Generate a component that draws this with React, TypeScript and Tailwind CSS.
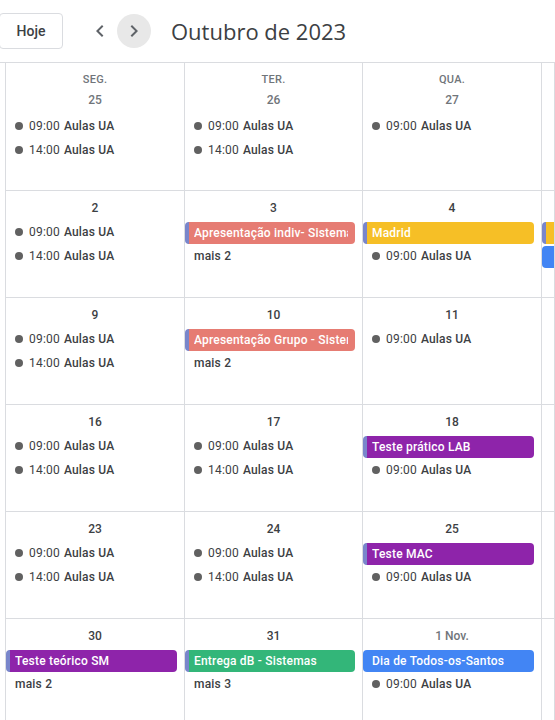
import type { ReactNode } from 'react';

type Item =
  | { kind: 'timed'; time: string; title: string }
  | { kind: 'chip'; title: string; color: string; stripe?: boolean }
  | { kind: 'more'; n: number };

type Cell = {
  dayName?: string;
  date?: string;
  muted?: boolean;
  items?: Item[];
};

const aulas = (time: string): Item => ({ kind: 'timed', time, title: 'Aulas UA' });

const SALMON = 'bg-[#e67c73]';
const BANANA = 'bg-[#f6bf26]';
const GRAPE = 'bg-[#8e24aa]';
const SAGE = 'bg-[#33b679]';
const BLUE = 'bg-[#4285f4]';

const weeks: Cell[][] = [
  [
    { dayName: 'SEG.', date: '25', muted: true, items: [aulas('09:00'), aulas('14:00')] },
    { dayName: 'TER.', date: '26', muted: true, items: [aulas('09:00'), aulas('14:00')] },
    { dayName: 'QUA.', date: '27', muted: true, items: [aulas('09:00')] },
    {},
  ],
  [
    { date: '2', items: [aulas('09:00'), aulas('14:00')] },
    {
      date: '3',
      items: [
        { kind: 'chip', title: 'Apresentação indiv- Sistemas', color: SALMON, stripe: true },
        { kind: 'more', n: 2 },
      ],
    },
    {
      date: '4',
      items: [{ kind: 'chip', title: 'Madrid', color: BANANA, stripe: true }, aulas('09:00')],
    },
    {
      date: '',
      items: [
        { kind: 'chip', title: 'Madrid', color: BANANA, stripe: true },
        { kind: 'chip', title: 'Evento', color: BLUE },
      ],
    },
  ],
  [
    { date: '9', items: [aulas('09:00'), aulas('14:00')] },
    {
      date: '10',
      items: [
        { kind: 'chip', title: 'Apresentação Grupo - Sistemas', color: SALMON, stripe: true },
        { kind: 'more', n: 2 },
      ],
    },
    { date: '11', items: [aulas('09:00')] },
    {},
  ],
  [
    { date: '16', items: [aulas('09:00'), aulas('14:00')] },
    { date: '17', items: [aulas('09:00'), aulas('14:00')] },
    {
      date: '18',
      items: [{ kind: 'chip', title: 'Teste prático LAB', color: GRAPE, stripe: true }, aulas('09:00')],
    },
    {},
  ],
  [
    { date: '23', items: [aulas('09:00'), aulas('14:00')] },
    { date: '24', items: [aulas('09:00'), aulas('14:00')] },
    {
      date: '25',
      items: [{ kind: 'chip', title: 'Teste MAC', color: GRAPE, stripe: true }, aulas('09:00')],
    },
    {},
  ],
  [
    {
      date: '30',
      items: [
        { kind: 'chip', title: 'Teste teórico SM', color: GRAPE, stripe: true },
        { kind: 'more', n: 2 },
      ],
    },
    {
      date: '31',
      items: [
        { kind: 'chip', title: 'Entrega dB - Sistemas', color: SAGE, stripe: true },
        { kind: 'more', n: 3 },
      ],
    },
    {
      date: '1 Nov.',
      muted: true,
      items: [{ kind: 'chip', title: 'Dia de Todos-os-Santos', color: BLUE }, aulas('09:00')],
    },
    {},
  ],
];

function EventRow({ item }: { item: Item }) {
  if (item.kind === 'chip') {
    return (
      <div className="h-[24px] pt-[2px]">
        <div
          className={`h-[22px] mr-[7px] rounded-[4px] flex items-center pr-[7px] ${item.color} ${
            item.stripe ? 'border-l-[4px] border-[#7986cb] pl-[5px]' : 'pl-[9px]'
          }`}
        >
          <div className="overflow-hidden whitespace-nowrap text-white text-[12px] font-medium tracking-[0.2px]">
            {item.title}
          </div>
        </div>
      </div>
    );
  }
  if (item.kind === 'more') {
    return (
      <div className="h-[24px] flex items-center pl-[9px] text-[12px] font-medium tracking-[0.2px] text-[#3c4043]">
        mais {item.n}
      </div>
    );
  }
  return (
    <div className="h-[24px] flex items-center pl-[9px] whitespace-nowrap text-[12px] tracking-[0.2px] text-[#3c4043]">
      <span className="w-[8px] h-[8px] rounded-full bg-[#616161] mr-[6px] shrink-0" />
      <span>{item.time}</span>
      <span className="ml-[4px] font-medium">{item.title}</span>
    </div>
  );
}

function DayCell({ cell, first }: { cell: Cell; first: boolean }) {
  const dateColor = cell.muted ? 'text-[#70757a]' : 'text-[#3c4043]';
  let head: ReactNode;
  if (first) {
    head = (
      <div className="pt-[8px]">
        <div className="h-[18px] flex items-center justify-center text-[11px] font-medium tracking-[0.3px] text-[#70757a]">
          {cell.dayName}
        </div>
        <div className={`h-[22px] mb-[3px] flex items-center justify-center text-[12px] font-medium ${dateColor}`}>
          {cell.date}
        </div>
      </div>
    );
  } else {
    head = (
      <div className="pt-[4px]">
        <div className={`h-[25px] flex items-center justify-center text-[12px] font-medium ${dateColor}`}>
          {cell.date}
        </div>
      </div>
    );
  }
  return (
    <div className="border-r border-b border-[#dadce0] overflow-hidden">
      {head}
      {cell.items?.map((it, i) => <EventRow key={i} item={it} />)}
    </div>
  );
}

function Chevron({ dir }: { dir: 'left' | 'right' }) {
  return (
    <svg width="24" height="24" viewBox="0 0 24 24" fill="#5f6368">
      {dir === 'left' ? (
        <path d="M15.41 7.41 14 6l-6 6 6 6 1.41-1.41L10.83 12z" />
      ) : (
        <path d="M8.59 16.59 10 18l6-6-6-6-1.41 1.41L13.17 12z" />
      )}
    </svg>
  );
}

export default function App() {
  return (
    <div className="w-[555px] h-[720px] overflow-hidden bg-white font-['Roboto',sans-serif]">
      <header className="h-[63px] border-b border-[#dadce0] flex items-center">
        <button className="w-[64px] h-[36px] ml-[-1px] border border-[#dadce0] rounded-[4px] text-[14px] font-medium text-[#3c4043]">
          Hoje
        </button>
        <div className="flex items-center ml-[20px]">
          <div className="w-[34px] h-[34px] rounded-full flex items-center justify-center">
            <Chevron dir="left" />
          </div>
          <div className="w-[34px] h-[34px] rounded-full bg-[#e8e8e8] flex items-center justify-center">
            <Chevron dir="right" />
          </div>
        </div>
        <h1 className="ml-[20px] text-[22px] text-[#3c4043] font-['Open_Sans',sans-serif] leading-none">
          Outubro de 2023
        </h1>
      </header>
      <div className="ml-[5px] border-l border-[#dadce0] grid grid-cols-[179px_178px_179px_1fr] grid-rows-[128px_107px_107px_107px_107px_107px]">
        {weeks.map((week, wi) =>
          week.map((cell, ci) => <DayCell key={`${wi}-${ci}`} cell={cell} first={wi === 0} />)
        )}
      </div>
    </div>
  );
}
